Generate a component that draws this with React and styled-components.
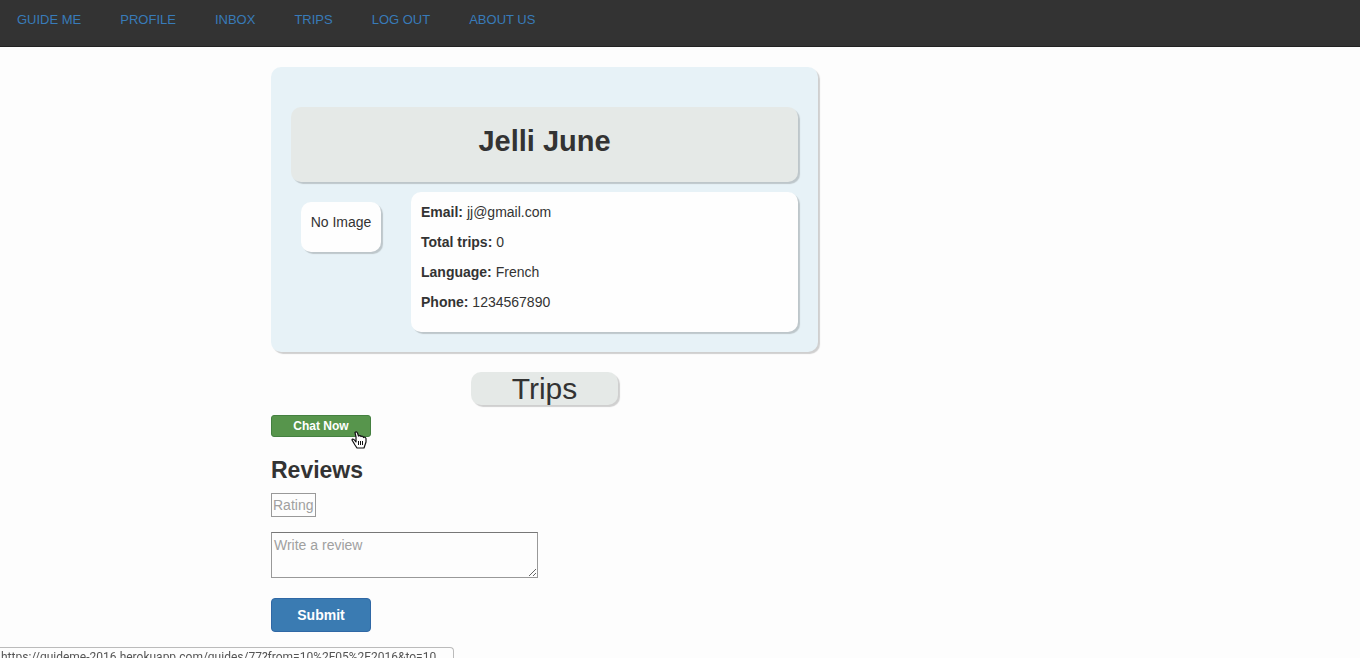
import React from "react";
import styled, { createGlobalStyle } from "styled-components";

const GlobalStyle = createGlobalStyle`
  *, *::before, *::after { box-sizing: border-box; }
  body {
    margin: 0;
    background: #fdfdfd;
    color: #333;
    font: 14px/20px "Liberation Sans", Arial, sans-serif;
  }
`;

const NavBar = styled.nav`
  display: flex;
  gap: 39px;
  height: 47px;
  padding: 4px 17px 0;
  background: #333;
  border-bottom: 1px solid #222;
`;

const NavLink = styled.a`
  color: #387bb9;
  font-size: 13px;
  line-height: 32px;
  text-decoration: none;
`;

const Page = styled.div`
  display: grid;
  grid-template-columns: 271fr 547fr 542fr;
  padding: 20px 0;
`;

const Main = styled.main`
  grid-column: 2;
  display: flex;
  flex-direction: column;
  align-items: flex-start;
`;

const Panel = styled.section`
  background: ${(p) => p.$fill || "#fefefe"};
  border-radius: 10px;
  box-shadow: 2px 2px 1px rgba(0, 0, 0, 0.18);
`;

const ProfileCard = styled(Panel)`
  display: grid;
  grid-template-columns: 120px 1fr;
  row-gap: 10px;
  width: 100%;
  padding: 40px 20px 20px;
`;

const NamePanel = styled(Panel)`
  grid-column: 1 / -1;
  height: 75px;
`;

const Name = styled.h1`
  margin: 0;
  text-align: center;
  font-size: 29px;
  line-height: 68px;
`;

const Photo = styled(Panel)`
  justify-self: start;
  align-self: start;
  width: 80px;
  height: 50px;
  margin: 10px;
  padding-top: 10px;
  text-align: center;
`;

const Details = styled(Panel)`
  padding: 10px 10px 20px;
`;

const Detail = styled.p`
  margin: 0;
  & + & { margin-top: 10px; }
`;

const TripsPanel = styled(Panel)`
  align-self: center;
  width: 147px;
  margin: 20px 0 10px;
`;

const TripsTitle = styled.h2`
  margin: 0;
  text-align: center;
  font-size: 30px;
  font-weight: 400;
  line-height: 33px;
`;

const ChatArea = styled.div`
  position: relative;
`;

const Button = styled.button`
  display: block;
  width: 100px;
  height: ${(p) => (p.$small ? 22 : 34)}px;
  padding: 0;
  border: 1px solid ${(p) => (p.$green ? "#448040" : "#3068a5")};
  border-radius: ${(p) => (p.$small ? 3 : 4)}px;
  background: ${(p) => (p.$green ? "#57954c" : "#3a7bb2")};
  color: #fff;
  font: bold ${(p) => (p.$small ? 12 : 14)}px/20px "Liberation Sans", Arial, sans-serif;
`;

const Pointer = styled.svg`
  position: absolute;
  left: 80px;
  top: 16px;
  width: 16px;
  height: 18px;
  pointer-events: none;
`;

const ReviewsTitle = styled.h3`
  margin: 20px 0 9px;
  font-size: 23px;
  line-height: 27px;
`;

const Form = styled.form`
  display: flex;
  flex-direction: column;
  align-items: flex-start;
`;

const RatingInput = styled.input`
  width: 45px;
  height: 24px;
  margin-bottom: 15px;
  padding: 1px;
  border: 1px solid #999;
  border-radius: 0;
  background: transparent;
  font: 14px/20px "Liberation Sans", Arial, sans-serif;
  &::placeholder { color: #a0a0a0; }
`;

const ReviewInput = styled.textarea`
  width: 267px;
  height: 46px;
  margin-bottom: 20px;
  padding: 2px;
  border: 1px solid #999;
  border-top-color: #777;
  background: transparent;
  font: 14px/20px "Liberation Sans", Arial, sans-serif;
  &::placeholder { color: #a0a0a0; }
`;

const StatusBar = styled.div`
  position: fixed;
  left: 0;
  bottom: -8px;
  width: 454px;
  padding-left: 1px;
  border: 1px solid #bbb;
  border-width: 1px 1px 0 0;
  border-radius: 0 4px 0 0;
  color: #555;
  white-space: nowrap;
  font: 12px/18px Roboto, "Liberation Sans", sans-serif;
`;

const links = ["GUIDE ME", "PROFILE", "INBOX", "TRIPS", "LOG OUT", "ABOUT US"];
const details = [
  ["Email:", "jj@gmail.com"],
  ["Total trips:", "0"],
  ["Language:", "French"],
  ["Phone:", "1234567890"],
];

export default function App() {
  return (
    <>
      <GlobalStyle />
      <NavBar>
        {links.map((text) => (
          <NavLink href="#" key={text}>{text}</NavLink>
        ))}
      </NavBar>
      <Page>
        <Main>
          <ProfileCard $fill="#e7f2f7">
            <NamePanel as="header" $fill="#e5e9e7">
              <Name>Jelli June</Name>
            </NamePanel>
            <Photo as="div">No Image</Photo>
            <Details as="div">
              {details.map(([label, value]) => (
                <Detail key={label}><strong>{label}</strong> {value}</Detail>
              ))}
            </Details>
          </ProfileCard>
          <TripsPanel $fill="#e5e9e7">
            <TripsTitle>Trips</TripsTitle>
          </TripsPanel>
          <ChatArea>
            <Button type="button" $small $green>Chat Now</Button>
            <Pointer viewBox="0 0 16 18" aria-hidden="true">
              <path
                d="M5 11 L3 8.500 Q1 7.500 1 9 L4 14 L6 17 H13 L14 14 L15 11 V7.500 Q14 5.500 12.500 6.500 Q11.500 4.500 10 5.500 Q9 4 7.500 5 L6.500 2 Q5.500 0 4 1.500 L5 6 Z"
                fill="#fff" stroke="#111" strokeWidth="1.2" strokeLinejoin="round"
              />
              <path d="M7.500 10v4M9.500 10v4M11.500 10v4" stroke="#111" />
            </Pointer>
          </ChatArea>
          <ReviewsTitle>Reviews</ReviewsTitle>
          <Form>
            <RatingInput type="text" placeholder="Rating" aria-label="Rating" />
            <ReviewInput placeholder="Write a review" aria-label="Write a review" />
            <Button type="submit">Submit</Button>
          </Form>
        </Main>
      </Page>
      <StatusBar>https://guideme-2016.herokuapp.com/guides/77?from=10%2F05%2F2016&amp;to=10</StatusBar>
    </>
  );
}
